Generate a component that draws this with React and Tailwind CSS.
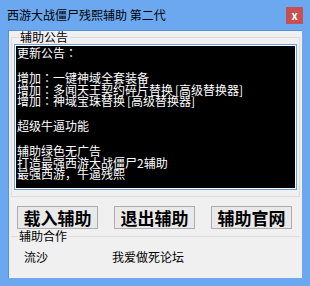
import React from "react";

const notice = [
  "更新公告：",
  "",
  "增加：一键神域全套装备",
  "增加：多闻天王契约碎片替换[高级替换器]",
  "增加：神域宝珠替换[高级替换器]",
  "",
  "超级牛逼功能",
  "",
  "辅助绿色无广告",
  "打造最强西游大战僵尸2辅助",
  "最强西游，牛逼残熙",
];

const buttons = ["载入辅助", "退出辅助", "辅助官网"];

// the old dialog font puts the colon in the middle of its cell and the
// half-width brackets in 6px cells, so those get their own spans
function renderLine(line) {
  return line.split(/([：\[\]])/).map((part, i) => {
    if (part === "：") {
      return (
        <span key={i} className="inline-block w-[12px] text-center" style={{ fontFamily: '"Noto Sans CJK TC", sans-serif' }}>
          ：
        </span>
      );
    }
    if (part === "[") return <span key={i} className="inline-block w-[6px] text-right">[</span>;
    if (part === "]") return <span key={i} className="inline-block w-[6px] text-left">]</span>;
    return <span key={i}>{part}</span>;
  });
}

function App() {
  return (
    <div
      className="w-[310px] h-[286px] bg-[#6ba8ef] flex flex-col overflow-hidden"
      style={{ fontFamily: '"Noto Sans CJK SC", "Noto Sans", sans-serif' }}
    >
      {/* title bar */}
      <div className="h-[30px] flex items-center justify-between pl-[7px] pr-[7px]">
        <span className="text-[12px] leading-none text-black">西游大战僵尸残熙辅助 第二代</span>
        <div className="w-[17px] h-[17px] bg-[#c75050] flex items-center justify-center text-white text-[11px] font-bold leading-none">
          x
        </div>
      </div>

      {/* client area */}
      <div className="mx-[8px] h-[248px] bg-[#f0f0f0] border-l border-t border-[#5b91d3] flex flex-col">
        <fieldset className="mx-[2px] h-[166px] border border-[#dcdcdc] px-[2px] pb-[2px]">
          <legend className="ml-[5px] px-[1px] text-[12px] leading-[12px] text-black">辅助公告</legend>
          <div className="mt-[1px] h-[146px] border border-[#6d9fd8] bg-white p-[1px]">
            <div className="h-full bg-black px-[1px] pt-[1px] text-white text-[12px] leading-[12px] whitespace-pre">
              {notice.map((line, i) =>
                line ? (
                  <div key={i} className="h-[11.5px]">{renderLine(line)}</div>
                ) : (
                  <div key={i} className="h-[13.5px]" />
                )
              )}
            </div>
          </div>
        </fieldset>

        <div className="flex mt-[9px] pl-[8px] gap-[16px]">
          {buttons.map((b) => (
            <div
              key={b}
              className="w-[81px] h-[23px] bg-[#e9e9e9] border border-[#adadad] flex items-center justify-center text-[17px] font-bold leading-none text-black"
            >
              {b}
            </div>
          ))}
        </div>

        <fieldset className="mx-[2px] mt-[1px] flex-1 border-t border-[#dcdcdc] px-[2px]">
          <legend className="ml-[5px] px-[1px] text-[12px] leading-[12px] text-black">辅助合作</legend>
          <div className="flex mt-[9px] text-[12px] leading-[12px] text-black">
            <span className="ml-[11px] w-[88px]">流沙</span>
            <span>我爱做死论坛</span>
          </div>
        </fieldset>
      </div>
    </div>
  );
}

export default App;
